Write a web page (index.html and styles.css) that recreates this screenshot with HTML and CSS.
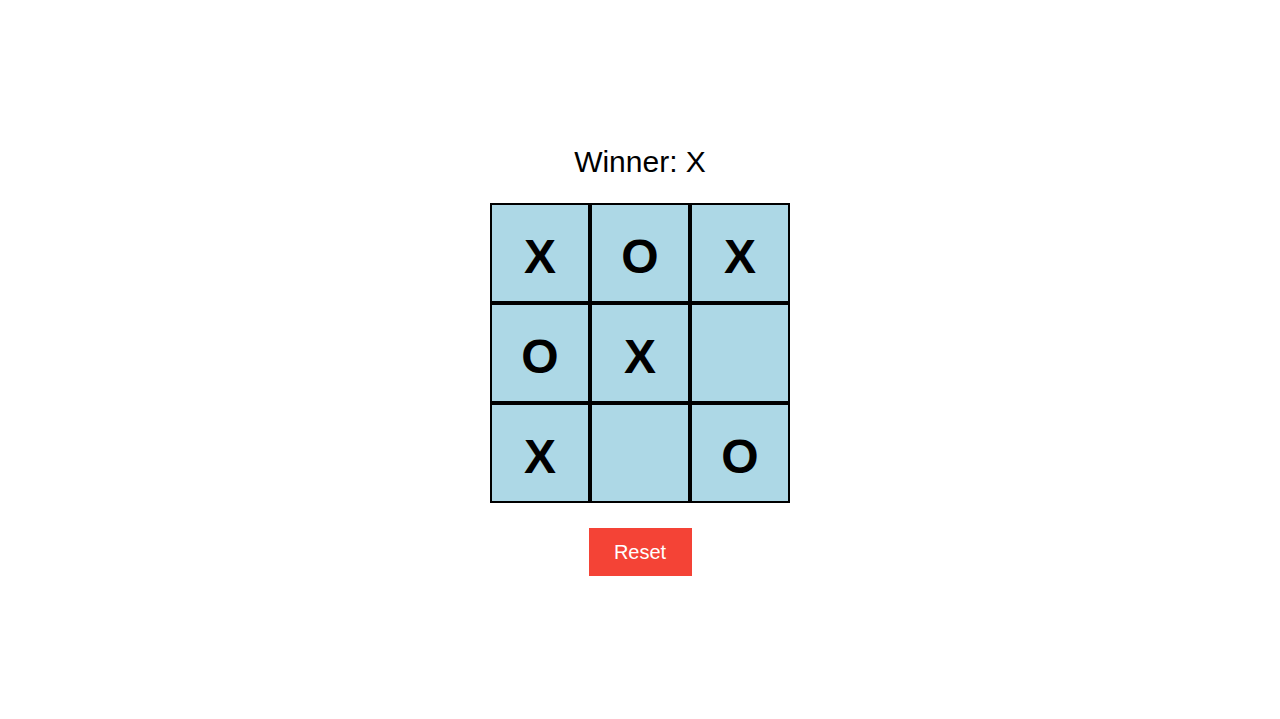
FILE: index.html
```html
<!DOCTYPE html>
<html lang="en">
<head>
<meta charset="utf-8">
<title>Tic Tac Toe</title>
<link rel="stylesheet" href="styles.css">
</head>
<body>
<main class="game">
  <div class="status">Winner: X</div>
  <div class="board">
    <div class="cell">X</div>
    <div class="cell">O</div>
    <div class="cell">X</div>
    <div class="cell">O</div>
    <div class="cell">X</div>
    <div class="cell"></div>
    <div class="cell">X</div>
    <div class="cell"></div>
    <div class="cell">O</div>
  </div>
  <button class="reset">Reset</button>
</main>
</body>
</html>
```

FILE: styles.css
```css
html, body {
  margin: 0;
  padding: 0;
  background: #ffffff;
}
body {
  font-family: "Liberation Sans", Arial, sans-serif;
  color: #000;
}
.game {
  box-sizing: border-box;
  min-height: 719px;
  padding-top: 2px;
  display: flex;
  flex-direction: column;
  align-items: center;
  justify-content: center;
}
.status {
  font-size: 30px;
  line-height: 34px;
  margin-bottom: 24px;
}
.board {
  display: grid;
  grid-template-columns: repeat(3, 100px);
  grid-template-rows: repeat(3, 100px);
}
.cell {
  box-sizing: border-box;
  border: 2px solid #000;
  background: #add8e6;
  display: flex;
  align-items: center;
  justify-content: center;
  font-size: 48px;
  font-weight: bold;
  padding-top: 7px;
}
.reset {
  margin-top: 25px;
  width: 103px;
  height: 48px;
  background: #f44336;
  color: #fff;
  border: none;
  font-family: "Liberation Sans", Arial, sans-serif;
  font-size: 20px;
  padding: 0;
}
```
